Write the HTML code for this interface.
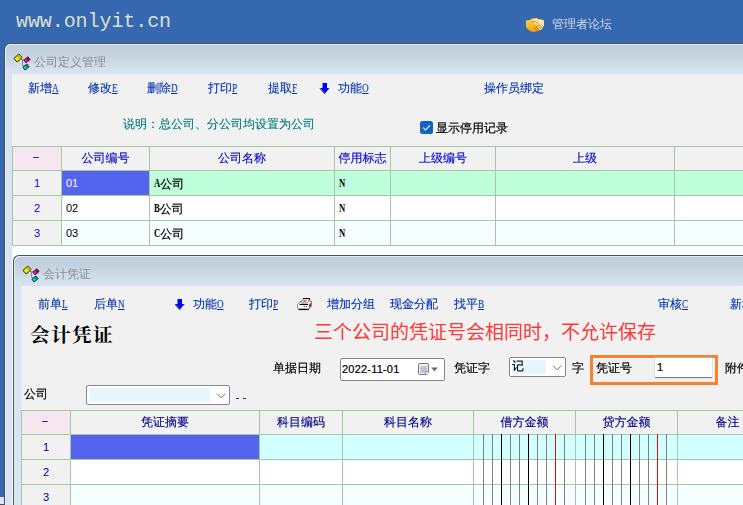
<!DOCTYPE html>
<html lang="zh-CN">
<head>
<meta charset="utf-8">
<title>www.onlyit.cn</title>
<style>
html,body{margin:0;padding:0;}
body{width:743px;height:505px;overflow:hidden;position:relative;background:#3668b0;
 font-family:"Liberation Sans","WenQuanYi Zen Hei",sans-serif;font-size:12px;line-height:14px;}
.abs,.t,.c{position:absolute;white-space:nowrap;}
.site{left:16px;top:8px;font-family:"Liberation Mono",monospace;font-size:20px;letter-spacing:-0.08px;line-height:28px;color:rgba(240,240,214,0.9);}
.forum{left:552px;top:17px;color:#d3dbe6;font-size:12px;line-height:14px;}
.win{position:absolute;border:1px solid #4c5058;border-radius:6px 0 0 0;border-right:none;border-bottom:none;
 background:linear-gradient(#becddc 0px,#c4d2e0 10px,#d9e5f2 30px,#d8e4f2 31px);box-shadow:inset 1px 1px 0 #e6edf6;}
.win1{left:4px;top:43px;width:745px;height:470px;}
.win2{left:13px;top:255px;width:740px;height:260px;}
.body1{position:absolute;left:12px;top:74px;width:740px;height:440px;background:#f1f1f1;}
.body2{position:absolute;left:21px;top:286px;width:740px;height:230px;background:#f1f1f1;}
.wtitle{color:#8c8c8c;font-size:12px;}
.m{color:#0032b2;-webkit-text-stroke:0.12px #0032b2;}
.u{display:inline-block;text-decoration:underline;font-family:"Liberation Serif",serif;font-size:12px;transform:scaleX(0.75);transform-origin:0 50%;margin-right:-2px;}
.d{font-family:"Liberation Sans",sans-serif;font-size:11px;font-style:normal;}
.cell .d,.cell .e{position:relative;top:-1px;}
.d,.e{-webkit-text-stroke:0 transparent;}
.dash{display:inline-block;font-style:normal;font-family:"Liberation Sans",sans-serif;font-size:12px;transform:scale(1.7,0.8);position:relative;top:-1px;left:-1px;}
.e{display:inline-block;font-family:"Liberation Serif",serif;font-size:12px;font-style:normal;font-weight:bold;transform:scaleX(0.72);transform-origin:0 50%;margin-right:-2.4px;}
.teal{color:#007c78;-webkit-text-stroke:0.12px #007c78;}
.blk{color:#000;-webkit-text-stroke:0.2px #000;}
.grid{position:absolute;background:#a3c9a3;}
.cell{position:absolute;overflow:hidden;white-space:nowrap;}
.cell span{position:absolute;left:0;right:0;top:6px;text-align:center;}
.cell span.hh{top:4px;}
.cell span.l{left:4px;text-align:left;}
.h1{color:#0808cc;-webkit-text-stroke:0.15px #0808cc;}
.h2{color:#000088;-webkit-text-stroke:0.15px #000088;}
.k{color:#000;-webkit-text-stroke:0.2px #000;}
.w{color:#fff;}
.big{left:30px;top:322px;font-family:"Liberation Serif","Noto Serif CJK SC",serif;font-weight:700;font-size:19.5px;line-height:28px;color:#000;letter-spacing:1.5px;}
.red{left:314px;top:319px;font-family:"Liberation Sans","Noto Sans CJK SC",sans-serif;font-size:19px;line-height:28px;color:#ff3838;}
.inp{position:absolute;background:#fff;border:1px solid #868686;border-radius:2px;box-sizing:border-box;}
.vl{position:absolute;width:1px;}
</style>
</head>
<body>
<div class="t site">www.onlyit.cn</div>
<svg class="abs" style="left:524px;top:16px" width="22" height="18" viewBox="524 16 22 18">
 <defs><linearGradient id="hg" x1="0" y1="0" x2="0" y2="1"><stop offset="0" stop-color="#ffd65a"/><stop offset="0.6" stop-color="#f8b820"/><stop offset="1" stop-color="#e8a010"/></linearGradient></defs>
 <path d="M526 20.5 L530 20 L532 18.4 L537 18 L538.5 19.5 L541 19.4 L544 20.5 L544 25.5 L542.6 27 L542 29 L538 31 L534 32 L531 31.4 L528 29.6 L526 27 Z" fill="url(#hg)"/>
 <path d="M530.6 20.8 Q534.5 18.8 538 19.6 L541 19.4 L544 20.6 L544 25.6 L542.6 27.2 L542 29 L539.8 30.2 L536.4 25 Q534 21.6 530.6 21.6 Z" fill="#ffe7a2"/>
 <path d="M531 21.2 Q535 20.6 537.6 23 L542.2 28" stroke="#9a6a28" stroke-width="0.7" fill="none"/>
 <path d="M537.2 24.6 L540.8 29.2 M535.8 26 L539.2 30.4 M534.2 27.4 L537.4 31.2" stroke="#8a5a18" stroke-width="0.7" fill="none"/>
</svg>
<div class="t forum">管理者论坛</div>

<div class="win win1"></div>
<div class="body1"></div>
<svg class="abs" style="left:12px;top:52px" width="20" height="20" viewBox="12 52 20 20">
 <path d="M21 59.5 H25 M22.5 59.5 V65.5 H24.5" stroke="#8c8c8c" fill="none" stroke-width="1"/>
 <g transform="translate(18,58) rotate(-43)"><rect x="-3.3" y="-2.4" width="6.6" height="4.8" fill="#f4f000" stroke="#000" stroke-width="0.8"/><rect x="0.5" y="-2" width="2.4" height="4" fill="#c4c000"/></g>
 <g transform="translate(27,59.8) rotate(-40)"><rect x="-2.6" y="-1.7" width="5.2" height="3.4" fill="#ff10f0" stroke="#000" stroke-width="0.8"/><rect x="0" y="-1.3" width="2.2" height="2.6" fill="#b00018"/></g>
 <g transform="translate(26,67) rotate(-40)"><rect x="-2.6" y="-1.7" width="5.2" height="3.4" fill="#00e8e8" stroke="#000" stroke-width="0.8"/><rect x="0" y="-1.3" width="2.2" height="2.6" fill="#008c8c"/></g>
</svg>
<div class="t wtitle" style="left:34px;top:55px">公司定义管理</div>

<div class="t m" style="left:28px;top:81px">新增<span class="u">A</span></div>
<div class="t m" style="left:88px;top:81px">修改<span class="u">E</span></div>
<div class="t m" style="left:147px;top:81px">删除<span class="u">D</span></div>
<div class="t m" style="left:208px;top:81px">打印<span class="u">P</span></div>
<div class="t m" style="left:268px;top:81px">提取<span class="u">F</span></div>
<div class="t m" style="left:338px;top:81px">功能<span class="u">O</span></div>
<svg class="abs" style="left:319px;top:82px" width="12" height="13" viewBox="319 82 12 13"><path d="M320 88.6 L325 94.2" stroke="#5a5a20" stroke-width="1"/><path d="M322.5 83 H327 V88 H329.5 L325 93.5 L320 88 H322.5 Z" fill="#0000ff"/></svg>
<div class="t m" style="left:484px;top:81px">操作员绑定</div>
<div class="t teal" style="left:123px;top:117px">说明：总公司、分公司均设置为公司</div>
<svg class="abs" style="left:420px;top:121px" width="13" height="13" viewBox="0 0 13 13"><rect x="0" y="0" width="13" height="13" rx="2.5" fill="#1363c5"/><path d="M3.2 6.6 L5.6 9 L10 4.4" stroke="#fff" stroke-width="1.05" fill="none"/></svg>
<div class="t blk" style="left:436px;top:121px">显示停用记录</div>
<div class="grid" style="left:12px;top:146px;width:740px;height:100px"></div>
<div class="abs" style="left:12px;top:246px;width:740px;height:260px;background:#f6fefe"></div>
<div class="cell " style="left:13px;top:147px;width:48px;height:23px;background:#f5e6f0;"><span class="h1 hh"><i class="dash">-</i></span></div>
<div class="cell " style="left:13px;top:171px;width:48px;height:24px;background:#f1f1f1;"><span class="h1"><i class="d">1</i></span></div>
<div class="cell " style="left:13px;top:196px;width:48px;height:24px;background:#f1f1f1;"><span class="h1"><i class="d">2</i></span></div>
<div class="cell " style="left:13px;top:221px;width:48px;height:24px;background:#f1f1f1;"><span class="h1"><i class="d">3</i></span></div>
<div class="cell " style="left:62px;top:147px;width:87px;height:23px;background:#f1f1f1;"><span class="h1 hh">公司编号</span></div>
<div class="cell " style="left:62px;top:171px;width:87px;height:24px;background:#5564ee;"><span class="w l"><i class="d">01</i></span></div>
<div class="cell " style="left:62px;top:196px;width:87px;height:24px;background:#ffffff;"><span class="k l"><i class="d">02</i></span></div>
<div class="cell " style="left:62px;top:221px;width:87px;height:24px;background:#f5ffff;"><span class="k l"><i class="d">03</i></span></div>
<div class="cell " style="left:150px;top:147px;width:184px;height:23px;background:#f1f1f1;"><span class="h1 hh">公司名称</span></div>
<div class="cell " style="left:150px;top:171px;width:184px;height:24px;background:#bfffdc;"><span class="k l"><i class="e">A</i>公司</span></div>
<div class="cell " style="left:150px;top:196px;width:184px;height:24px;background:#ffffff;"><span class="k l"><i class="e">B</i>公司</span></div>
<div class="cell " style="left:150px;top:221px;width:184px;height:24px;background:#f5ffff;"><span class="k l"><i class="e">C</i>公司</span></div>
<div class="cell " style="left:335px;top:147px;width:55px;height:23px;background:#f1f1f1;"><span class="h1 hh">停用标志</span></div>
<div class="cell " style="left:335px;top:171px;width:55px;height:24px;background:#bfffdc;"><span class="k l"><i class="e">N</i></span></div>
<div class="cell " style="left:335px;top:196px;width:55px;height:24px;background:#ffffff;"><span class="k l"><i class="e">N</i></span></div>
<div class="cell " style="left:335px;top:221px;width:55px;height:24px;background:#f5ffff;"><span class="k l"><i class="e">N</i></span></div>
<div class="cell " style="left:391px;top:147px;width:104px;height:23px;background:#f1f1f1;"><span class="h1 hh">上级编号</span></div>
<div class="cell " style="left:391px;top:171px;width:104px;height:24px;background:#bfffdc;"></div>
<div class="cell " style="left:391px;top:196px;width:104px;height:24px;background:#ffffff;"></div>
<div class="cell " style="left:391px;top:221px;width:104px;height:24px;background:#f5ffff;"></div>
<div class="cell " style="left:496px;top:147px;width:178px;height:23px;background:#f1f1f1;"><span class="h1 hh">上级</span></div>
<div class="cell " style="left:496px;top:171px;width:178px;height:24px;background:#bfffdc;"></div>
<div class="cell " style="left:496px;top:196px;width:178px;height:24px;background:#ffffff;"></div>
<div class="cell " style="left:496px;top:221px;width:178px;height:24px;background:#f5ffff;"></div>
<div class="cell " style="left:675px;top:147px;width:85px;height:23px;background:#f1f1f1;"></div>
<div class="cell " style="left:675px;top:171px;width:85px;height:24px;background:#bfffdc;"></div>
<div class="cell " style="left:675px;top:196px;width:85px;height:24px;background:#ffffff;"></div>
<div class="cell " style="left:675px;top:221px;width:85px;height:24px;background:#f5ffff;"></div>

<div class="win win2"></div>
<div class="body2"></div>
<svg class="abs" style="left:21px;top:264px" width="20" height="20" viewBox="12 52 20 20">
 <path d="M21 59.5 H25 M22.5 59.5 V65.5 H24.5" stroke="#8c8c8c" fill="none" stroke-width="1"/>
 <g transform="translate(18,58) rotate(-43)"><rect x="-3.3" y="-2.4" width="6.6" height="4.8" fill="#f4f000" stroke="#000" stroke-width="0.8"/><rect x="0.5" y="-2" width="2.4" height="4" fill="#c4c000"/></g>
 <g transform="translate(27,59.8) rotate(-40)"><rect x="-2.6" y="-1.7" width="5.2" height="3.4" fill="#ff10f0" stroke="#000" stroke-width="0.8"/><rect x="0" y="-1.3" width="2.2" height="2.6" fill="#b00018"/></g>
 <g transform="translate(26,67) rotate(-40)"><rect x="-2.6" y="-1.7" width="5.2" height="3.4" fill="#00e8e8" stroke="#000" stroke-width="0.8"/><rect x="0" y="-1.3" width="2.2" height="2.6" fill="#008c8c"/></g>
</svg>
<div class="t wtitle" style="left:43px;top:267px">会计凭证</div>

<div class="t m" style="left:38px;top:297px">前单<span class="u">L</span></div>
<div class="t m" style="left:94px;top:297px">后单<span class="u">N</span></div>
<div class="t m" style="left:193px;top:297px">功能<span class="u">O</span></div>
<div class="t m" style="left:249px;top:297px">打印<span class="u">P</span></div>
<div class="t m" style="left:327px;top:297px">增加分组<span class="u"></span></div>
<div class="t m" style="left:390px;top:297px">现金分配<span class="u"></span></div>
<div class="t m" style="left:454px;top:297px">找平<span class="u">B</span></div>
<div class="t m" style="left:658px;top:297px">审核<span class="u">C</span></div>
<div class="t m" style="left:730px;top:297px">新增<span class="u">A</span></div>
<svg class="abs" style="left:296px;top:296px" width="18" height="16" viewBox="296 296 18 16">
<polygon points="297.5,304.5 301,301 311.5,301 311.5,306 308.5,309.5 299,309.5 297.5,308" fill="#fff" stroke="#6a6a6a" stroke-width="0.8"/>
<polygon points="308.8,304.8 311.4,301.6 311.4,305.8 308.8,309" fill="#808080"/>
<polygon points="309.6,305.2 310.8,303.8 310.8,305.8 309.6,307.4" fill="#303030"/>
<path d="M299.6 304.5 H308" stroke="#000" stroke-width="1" fill="none"/>
<path d="M298.6 309.4 H308.6" stroke="#000" stroke-width="1.4" fill="none"/>
<polygon points="300.8,303.2 303.2,298.6 309.4,298.6 307.4,303.2" fill="#fff" stroke="#555" stroke-width="0.6"/>
<path d="M303 298.5 H309.6 V300" stroke="#000" stroke-width="0.9" fill="none"/>
<path d="M303.2 299.8 L306.4 302.6 M306.4 299.6 L302.6 302.8" stroke="#f00000" stroke-width="0.8"/>
<circle cx="304.4" cy="306.6" r="0.7" fill="#ff0000"/><circle cx="306.6" cy="306.6" r="0.7" fill="#ff0000"/>
</svg>
<svg class="abs" style="left:174px;top:298px" width="12" height="13" viewBox="319 82 12 13"><path d="M320 88.6 L325 94.2" stroke="#5a5a20" stroke-width="1"/><path d="M322.5 83 H327 V88 H329.5 L325 93.5 L320 88 H322.5 Z" fill="#0000ff"/></svg>
<div class="t big">会计凭证</div>
<div class="t red">三个公司的凭证号会相同时，不允许保存</div>
<div class="t blk" style="left:273px;top:361px">单据日期</div>
<div class="inp" style="left:340px;top:358px;width:105px;height:23px"></div>
<div class="t blk d" style="left:342px;top:362px;letter-spacing:0.2px">2022-11-01</div>
<svg class="abs" style="left:417px;top:362px" width="23" height="14" viewBox="417 362 23 14"><rect x="418.5" y="363.5" width="10" height="11" rx="1.4" fill="#eef2fa" stroke="#80706e" stroke-width="1"/><rect x="420.4" y="366.3" width="6.8" height="6.8" fill="#a8b2cb"/><rect x="421.3" y="367.3" width="1" height="1" fill="#fff"/><rect x="423.5" y="367.3" width="1" height="1" fill="#fff"/><rect x="425.7" y="367.3" width="1" height="1" fill="#fff"/><rect x="421.3" y="369.5" width="1" height="1" fill="#fff"/><rect x="423.5" y="369.5" width="1" height="1" fill="#fff"/><rect x="425.7" y="369.5" width="1" height="1" fill="#fff"/><rect x="421.3" y="371.7" width="1" height="1" fill="#fff"/><rect x="423.5" y="371.7" width="1" height="1" fill="#fff"/><rect x="425.7" y="371.7" width="1" height="1" fill="#fff"/><path d="M425.6 374.4 L428.6 371.4 L428.6 374.4 Z" fill="#f4f4f4"/><path d="M425.4 374 L425.8 371.8 L428.4 371.4" stroke="#80706e" stroke-width="0.7" fill="#fff"/><path d="M431.2 367.4 H437.8 L434.5 371.2 Z" fill="#4a6a9c"/></svg>
<div class="t blk" style="left:454px;top:361px">凭证字</div>
<div class="inp" style="left:509px;top:357px;width:57px;height:20px"></div>
<div class="abs" style="left:512px;top:360px;width:34px;height:14px;background:#e7f6fe"></div>
<div class="t blk" style="left:512px;top:359px">记</div>
<svg class="abs" style="left:551px;top:363px" width="12" height="9" viewBox="551 363 12 9"><path d="M553 365.6 L557.1 369.8 L561.2 365.6" stroke="#606060" stroke-width="0.9" fill="none"/></svg>
<div class="t blk" style="left:572px;top:361px">字</div>
<div class="abs" style="left:590px;top:355px;width:128px;height:30px;box-sizing:border-box;border:3px solid #f4822f"></div>
<div class="t blk" style="left:596px;top:361px">凭证号</div>
<div class="abs" style="left:655px;top:358px;width:57px;height:19px;background:#fff;border-bottom:1px solid #808080;box-shadow:0 0 0 0.5px #d8d8d8"></div>
<div class="t blk d" style="left:657px;top:360px">1</div>
<div class="t blk" style="left:725px;top:361px">附件</div>
<div class="t blk" style="left:24px;top:387px">公司</div>
<div class="inp" style="left:86px;top:385px;width:144px;height:20px"></div>
<div class="abs" style="left:89px;top:388px;width:121px;height:14px;background:#e7f6fe"></div>
<svg class="abs" style="left:214.9px;top:391.2px" width="12" height="9" viewBox="551 363 12 9"><path d="M553 365.6 L557.1 369.8 L561.2 365.6" stroke="#606060" stroke-width="0.9" fill="none"/></svg>
<div class="abs" style="left:236px;top:398px;width:2.5px;height:1px;background:#1030b0"></div>
<div class="abs" style="left:243px;top:398px;width:2.5px;height:1px;background:#1030b0"></div>
<div class="grid" style="left:21px;top:410px;width:740px;height:100px"></div>
<div class="cell " style="left:22px;top:411px;width:48px;height:23px;background:#f5e6f0;"><span class="h2 hh"><i class="dash">-</i></span></div>
<div class="cell " style="left:22px;top:435px;width:48px;height:24px;background:#f1f1f1;"><span class="h2"><i class="d">1</i></span></div>
<div class="cell " style="left:22px;top:460px;width:48px;height:24px;background:#f1f1f1;"><span class="h2"><i class="d">2</i></span></div>
<div class="cell " style="left:22px;top:485px;width:48px;height:24px;background:#f1f1f1;"><span class="h2"><i class="d">3</i></span></div>
<div class="cell " style="left:71px;top:411px;width:188px;height:23px;background:#f1f1f1;"><span class="h2 hh">凭证摘要</span></div>
<div class="cell " style="left:71px;top:435px;width:188px;height:24px;background:#5564ee;"></div>
<div class="cell " style="left:71px;top:460px;width:188px;height:24px;background:#ffffff;"></div>
<div class="cell " style="left:71px;top:485px;width:188px;height:24px;background:#f5ffff;"></div>
<div class="cell " style="left:260px;top:411px;width:82px;height:23px;background:#f1f1f1;"><span class="h2 hh">科目编码</span></div>
<div class="cell " style="left:260px;top:435px;width:82px;height:24px;background:#d2ffff;"></div>
<div class="cell " style="left:260px;top:460px;width:82px;height:24px;background:#ffffff;"></div>
<div class="cell " style="left:260px;top:485px;width:82px;height:24px;background:#f5ffff;"></div>
<div class="cell " style="left:343px;top:411px;width:130px;height:23px;background:#f1f1f1;"><span class="h2 hh">科目名称</span></div>
<div class="cell " style="left:343px;top:435px;width:130px;height:24px;background:#d2ffff;"></div>
<div class="cell " style="left:343px;top:460px;width:130px;height:24px;background:#ffffff;"></div>
<div class="cell " style="left:343px;top:485px;width:130px;height:24px;background:#f5ffff;"></div>
<div class="cell " style="left:474px;top:411px;width:101px;height:23px;background:#f1f1f1;"><span class="h2 hh">借方金额</span></div>
<div class="cell " style="left:474px;top:435px;width:101px;height:24px;background:#d2ffff;"></div>
<div class="cell " style="left:474px;top:460px;width:101px;height:24px;background:#ffffff;"></div>
<div class="cell " style="left:474px;top:485px;width:101px;height:24px;background:#f5ffff;"></div>
<div class="cell " style="left:576px;top:411px;width:101px;height:23px;background:#f1f1f1;"><span class="h2 hh">贷方金额</span></div>
<div class="cell " style="left:576px;top:435px;width:101px;height:24px;background:#d2ffff;"></div>
<div class="cell " style="left:576px;top:460px;width:101px;height:24px;background:#ffffff;"></div>
<div class="cell " style="left:576px;top:485px;width:101px;height:24px;background:#f5ffff;"></div>
<div class="cell " style="left:678px;top:411px;width:99px;height:23px;background:#f1f1f1;"><span class="h2 hh">备注</span></div>
<div class="cell " style="left:678px;top:435px;width:99px;height:24px;background:#d2ffff;"></div>
<div class="cell " style="left:678px;top:460px;width:99px;height:24px;background:#ffffff;"></div>
<div class="cell " style="left:678px;top:485px;width:99px;height:24px;background:#f5ffff;"></div>
<div class="vl" style="left:483px;top:434px;height:80px;background:#808080"></div>
<div class="vl" style="left:492px;top:434px;height:80px;background:#808080"></div>
<div class="vl" style="left:501px;top:434px;height:80px;background:#000000"></div>
<div class="vl" style="left:510px;top:434px;height:80px;background:#808080"></div>
<div class="vl" style="left:519px;top:434px;height:80px;background:#808080"></div>
<div class="vl" style="left:528px;top:434px;height:80px;background:#000000"></div>
<div class="vl" style="left:537px;top:434px;height:80px;background:#808080"></div>
<div class="vl" style="left:546px;top:434px;height:80px;background:#808080"></div>
<div class="vl" style="left:555px;top:434px;height:80px;background:#ff0000"></div>
<div class="vl" style="left:564px;top:434px;height:80px;background:#808080"></div>
<div class="vl" style="left:585px;top:434px;height:80px;background:#808080"></div>
<div class="vl" style="left:594px;top:434px;height:80px;background:#808080"></div>
<div class="vl" style="left:603px;top:434px;height:80px;background:#000000"></div>
<div class="vl" style="left:612px;top:434px;height:80px;background:#808080"></div>
<div class="vl" style="left:621px;top:434px;height:80px;background:#808080"></div>
<div class="vl" style="left:630px;top:434px;height:80px;background:#000000"></div>
<div class="vl" style="left:639px;top:434px;height:80px;background:#808080"></div>
<div class="vl" style="left:648px;top:434px;height:80px;background:#808080"></div>
<div class="vl" style="left:657px;top:434px;height:80px;background:#ff0000"></div>
<div class="vl" style="left:666px;top:434px;height:80px;background:#808080"></div>
<div class="abs" style="left:0;top:497px;width:4px;height:7px;background:#dbe7f5"></div><div class="abs" style="left:0;top:504px;width:5px;height:1px;background:#4c5058"></div>
</body>
</html>
